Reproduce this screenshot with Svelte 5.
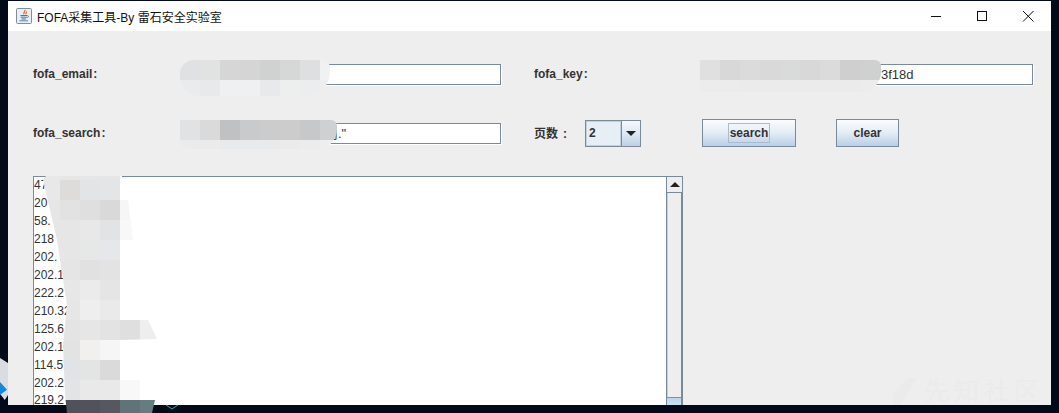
<script>
  const emailRows = [
    ['#e0e1e2','#e1e3e2','#d5d6d5','#d4d5d4','#d0d2d1','#d6d7d7','#dddfe1','#f0f1f3'],
    ['#eaebec','#e8e9ea','#eff0f1','#eff0f1','#e8e9ea','#edeeee','#ecedee','#eeeeee']
  ];
  const searchRows = [
    ['#e1e2e3','#dadada','#c0c1c2','#c9cacb','#cbcccb','#cbcccb','#c7c8c9','#cfd0d1'],
    ['#ebebec','#ebebec','#e9eaeb','#e9eaeb','#e9eaeb','#ebebeb','#ececec','#eeeeee']
  ];
  const keyRows = [
    ['#e0e0e0','#d8d8d8','#dbdbdb','#d9d9d9','#d9dada','#d8d8d8','#dbdbdb','#cfcfcf','#cfd0d0'],
    ['#ececec','#ececec','#ebebeb','#ebebeb','#ebebeb','#ebebeb','#ebebeb','#ebebeb','#ececec']
  ];
  const areaRows = [
    ['#e8e8e8','#e6e6e6','#e6e6e6','#e6e6e6','#fff','#fff'],
    ['#e8e8e8','#dedcda','#e3e4e6','#e4e5e7','#fff','#fff'],
    ['#e6e6e6','#e2e2e2','#dfdfdf','#d9d9d9','#f6f6f6','#fff'],
    ['#e6e6e6','#e6e6e6','#e8e8e8','#e2e3e4','#f8f8f8','#fff'],
    ['#e6e6e6','#e6e6e6','#e6e7e7','#e6e7ea','#fff','#fff'],
    ['#e3e3e3','#e5e5e5','#e1e1e1','#e3e3e3','#fff','#fff'],
    ['#e4e4e4','#e7e7e7','#ebebeb','#e5e5e5','#fff','#fff'],
    ['#e6e6e6','#e6e6e6','#eeeeee','#eaeaea','#fff','#fff'],
    ['#e4e4e4','#e4e4e4','#e6e6e6','#e3e3e3','#dfdfdf','#eeeeee'],
    ['#e3e3e3','#e3e3e3','#f1f0ee','#f6f6f6','#fff','#fff'],
    ['#e2e3e5','#e2e3e5','#e3e4e4','#dadada','#fff','#fff'],
    ['#e3e4e6','#e3e4e6','#e9e9e9','#e9e9e9','#f8f8f8','#fff'],
    ['#4f525b','#4f525b','#50525c','#565860','#5f7378','#667c80']
  ];
  const lines = ['47','20','58.','218','202.','202.1','222.2','210.32','125.6','202.1','114.5','202.2','219.2'];
</script>

<div class="page">
  <div class="window">
    <header class="titlebar">
      <svg class="appicon" viewBox="0 0 16 16" aria-hidden="true">
        <rect x="0.5" y="0.5" width="15" height="15" rx="1" fill="#e9eef3" stroke="#7f8c99"/>
        <path d="M8.800 1.800c1.200 1.600-2 2.400-.8 4.400M10.400 3.600c.7 1-1.100 1.500-.5 2.600" fill="none" stroke="#d9661f" stroke-width="1.200"/>
        <path d="M4.500 7.500h6.500M4.700 9.200h6.100M5.500 11h4.400" stroke="#44779f" stroke-width="1"/>
        <path d="M11 7.600c2 -.4 2 2 -.4 2.200" fill="none" stroke="#44779f" stroke-width="0.800"/>
        <path d="M3.500 12.800h8.500" stroke="#5d86ad" stroke-width="1"/>
      </svg>
      <span class="title">FOFA采集工具-By 雷石安全实验室</span>
      <div class="controls">
        <svg class="ctl" viewBox="0 0 46 30" aria-hidden="true"><path d="M18 15.500h10" stroke="#111" stroke-width="1"/></svg>
        <svg class="ctl" viewBox="0 0 46 30" aria-hidden="true"><rect x="18.500" y="10.500" width="9" height="9" fill="none" stroke="#111" stroke-width="1"/></svg>
        <svg class="ctl" viewBox="0 0 46 30" aria-hidden="true"><path d="M18 10l10.500 10.500M28.500 10L18 20.500" stroke="#111" stroke-width="1"/></svg>
      </div>
    </header>

    <main class="content">
      <div class="row first">
        <span class="label lead">fofa_email<em>:</em></span>
        <div class="field left"></div>
        <span class="label keylabel">fofa_key<em>:</em></span>
        <div class="field right">3f18d</div>
      </div>

      <div class="row second">
        <span class="label lead">fofa_search<em>:</em></span>
        <div class="field left searchfield">刂."</div>
        <span class="label pagelabel">页数<em class="wide">:</em></span>
        <div class="combo">
          <div class="combovalue"><span>2</span></div>
          <div class="comboarrow"><i></i></div>
        </div>
        <button class="btn searchbtn"><span>search</span></button>
        <button class="btn clearbtn">clear</button>
      </div>

      <div class="area">
        <div class="text">
          {#each lines as line, i}
            <div class="line" class:last={i === lines.length - 1}>{line}</div>
          {/each}
        </div>
        <div class="scrollbar">
          <div class="arrowbtn"><i></i></div>
          <div class="track"></div>
          <div class="thumb"></div>
        </div>
      </div>
    </main>
  </div>

  <div class="mosaic m-email">
    {#each emailRows as r}{#each r as c}<b style="background:{c}"></b>{/each}{/each}
  </div>
  <div class="mosaic m-search">
    {#each searchRows as r}{#each r as c}<b style="background:{c}"></b>{/each}{/each}
  </div>
  <div class="mosaic m-key">
    {#each keyRows as r}{#each r as c}<b style="background:{c}"></b>{/each}{/each}
  </div>
  <div class="mosaic m-area">
    {#each areaRows as r}{#each r as c}<b style="background:{c}"></b>{/each}{/each}
  </div>

  <div class="watermark"><i></i><span>先知社区</span></div>
  <div class="desk-icon"><i></i></div>
  <svg class="chevron" viewBox="0 0 14 5" aria-hidden="true"><path d="M1 0l6 4 6-4" fill="none" stroke="#17b3b8" stroke-width="1"/></svg>
</div>

<style>
  :global(body) { margin: 0; background: #020a1a; }
  .page {
    position: relative;
    width: 1059px;
    height: 413px;
    overflow: hidden;
    background: #020a1a;
    font-family: "Liberation Sans", "Noto Sans CJK SC", sans-serif;
    padding: 1px 8px 8px;
    box-sizing: border-box;
  }
  .window { height: 404px; display: flex; flex-direction: column; overflow: hidden; background: #eeeeee; }
  .titlebar {
    height: 30px;
    flex: none;
    background: #fff;
    display: flex;
    align-items: center;
    padding-left: 8px;
  }
  .appicon { width: 16px; height: 16px; flex: none; }
  .title { margin-left: 5px; font-size: 12px; color: #111; }
  .controls { margin-left: auto; display: flex; }
  .ctl { width: 46px; height: 30px; display: block; }

  .content { flex: 1; padding: 33px 0 0 25px; min-height: 0; display: flex; flex-direction: column; }
  .row { display: flex; align-items: center; flex: none; }
  .first { height: 21px; }
  .second { height: 28px; margin-top: 34px; }
  .label { font-size: 12px; font-weight: 700; color: #333; white-space: nowrap; padding-bottom: 1px; }
  .label em { font-style: normal; margin-left: 1px; }
  .label em.wide { margin-left: 5px; }
  .lead { width: 153px; flex: none; }
  .keylabel { width: 166px; margin-left: 33px; flex: none; }
  .pagelabel { width: 51px; margin-left: 33px; flex: none; }

  .field {
    height: 21px;
    box-sizing: border-box;
    background: #fff;
    border: 1px solid #7a8a99;
    box-shadow: 1px 1px 0 #fff;
    font-size: 13px;
    line-height: 19px;
    color: #333;
    flex: none;
  }
  .left { width: 315px; }
  .right { width: 333px; padding-left: 180px; }
  .searchfield { padding-left: 138px; }

  .combo {
    width: 56px;
    height: 27px;
    box-sizing: border-box;
    border: 1px solid #7a8a99;
    display: flex;
    flex: none;
    margin-top: 1px;
  }
  .combovalue {
    width: 35px;
    background: #e6eef6;
    border: 1px solid #c3d0dd;
    box-sizing: border-box;
    font-size: 12px;
    font-weight: 700;
    color: #333;
    line-height: 23px;
    padding-left: 2px;
  }
  .comboarrow {
    flex: 1;
    border-left: 1px solid #7a8a99;
    background: linear-gradient(#f4f8fb, #dde8f3 50%, #bcd1e6);
    display: flex;
    align-items: center;
    justify-content: center;
  }
  .comboarrow i {
    width: 0;
    height: 0;
    border-left: 5px solid transparent;
    border-right: 5px solid transparent;
    border-top: 5px solid #222;
  }

  .btn {
    height: 28px;
    box-sizing: border-box;
    border: 1px solid #7a8a99;
    background: linear-gradient(#fbfcfe, #e3ecf5 50%, #b9cfe5);
    font: 700 12px "Liberation Sans", sans-serif;
    color: #333;
    padding: 0;
    flex: none;
    display: flex;
    align-items: center;
    justify-content: center;
  }
  .searchbtn { width: 94px; margin-left: 61px; }
  .searchbtn span {
    border: 1px solid #a9bccf;
    height: 20px;
    width: 42px;
    box-sizing: border-box;
    line-height: 18px;
    display: block;
  }
  .clearbtn { width: 63px; margin-left: 40px; }

  .area {
    margin-top: 29px;
    width: 650px;
    height: 240px;
    flex: none;
    box-sizing: border-box;
    border: 1px solid #7a8a99;
    border-bottom: 0;
    display: flex;
    background: #fff;
  }
  .text { flex: 1; overflow: hidden; }
  .line { height: 18px; line-height: 17px; font-size: 12px; color: #333; }
  .line.last { height: 14px; line-height: 14px; }
  .scrollbar {
    width: 16px;
    flex: none;
    box-sizing: border-box;
    border-left: 1px solid #7a8a99;
    display: flex;
    flex-direction: column;
    background: #eeeeee;
  }
  .arrowbtn {
    height: 16px;
    flex: none;
    box-sizing: border-box;
    border-bottom: 1px solid #7a8a99;
    display: flex;
    align-items: center;
    justify-content: center;
    background: #eeeeee;
  }
  .arrowbtn i {
    width: 0;
    height: 0;
    border-left: 5px solid transparent;
    border-right: 5px solid transparent;
    border-bottom: 5px solid #222;
  }
  .track { height: 204px; flex: none; box-sizing: border-box; border-left: 1px solid #b8d0ea; border-right: 1px solid #7a8a99; }
  .thumb {
    flex: 1;
    border-top: 1px solid #7092c8;
    border-right: 1px solid #7a8a99;
    background: linear-gradient(#bcd3ec, #f2f6fb);
  }

  .mosaic { position: absolute; display: grid; pointer-events: none; }
  .mosaic b { display: block; }
  .m-email {
    left: 180px; top: 60px; width: 150px;
    grid-template-columns: repeat(7, 20px) 10px;
    grid-template-rows: 20px 16px;
    border-radius: 14px 8px 24px 20px;
    overflow: hidden;
  }
  .m-search {
    left: 180px; top: 120px; width: 157px;
    grid-template-columns: repeat(7, 20px) 17px;
    grid-template-rows: 20px 9px;
    border-radius: 0 6px 20px 10px;
    overflow: hidden;
  }
  .m-key {
    left: 700px; top: 60px; width: 181px;
    grid-template-columns: repeat(8, 20px) 21px;
    grid-template-rows: 20px 12px;
    border-radius: 0 6px 20px 0;
    overflow: hidden;
  }
  .m-area {
    left: 40px; top: 160px; width: 120px;
    grid-template-columns: repeat(6, 20px);
    grid-template-rows: repeat(13, 20px);
    clip-path: polygon(6px 16px, 10px 16px, 82px 16px, 80px 40px, 88px 40px, 93px 80px, 80px 80px, 80px 160px, 108px 160px, 117px 179px, 80px 180px, 80px 220px, 100px 220px, 100px 240px, 115px 240px, 112px 253px, 27px 253px, 25px 235px, 23px 185px, 27px 145px, 17px 80px, 3px 20px);
  }

  .watermark {
    position: absolute;
    left: 893px;
    top: 378px;
    height: 27px;
    width: 152px;
    color: #ebebeb;
    font-size: 25px;
    line-height: 27px;
    letter-spacing: 5px;
    white-space: nowrap;
    display: flex;
    gap: 7px;
  }
  .watermark i {
    width: 24px;
    height: 27px;
    background: #ebebeb;
    clip-path: polygon(60% 0, 100% 0, 30% 100%, 0 100%, 0 60%);
    flex: none;
  }
  .desk-icon {
    position: absolute;
    left: 0;
    top: 358px;
    width: 8px;
    height: 42px;
    background: #d9dce0;
    clip-path: polygon(0 0, 100% 12%, 100% 88%, 60% 100%, 0 85%);
  }
  .desk-icon i {
    position: absolute;
    left: 0;
    top: 24px;
    width: 7px;
    height: 13px;
    background: #1487d6;
    clip-path: polygon(0 0, 100% 60%, 0 100%);
  }
  .chevron { position: absolute; left: 165px; top: 405px; width: 14px; height: 5px; }
</style>
